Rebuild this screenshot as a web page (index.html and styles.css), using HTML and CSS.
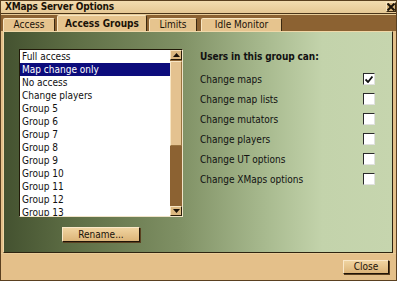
FILE: index.html
```html
<!DOCTYPE html>
<html>
<head>
<meta charset="utf-8">
<link rel="stylesheet" href="styles.css">
</head>
<body>
<div class="window">
  <div class="titlebar">
    <span class="title">XMaps Server Options</span>
    <span class="xbtn">
      <svg width="8" height="8" viewBox="0 0 8 8"><path d="M0.5 0.5 L7.5 7.5 M7.5 0.5 L0.5 7.5" stroke="#1a1208" stroke-width="2"/></svg>
    </span>
  </div>
  <div class="tabbar">
    <div class="tab t1">Access</div>
    <div class="tab active">Access Groups</div>
    <div class="tab t3">Limits</div>
    <div class="tab t4">Idle Monitor</div>
  </div>
  <div class="panel">
    <div class="leftcol">
      <div class="listbox">
        <ul class="items">
          <li>Full access</li>
          <li class="sel">Map change only</li>
          <li>No access</li>
          <li>Change players</li>
          <li>Group 5</li>
          <li>Group 6</li>
          <li>Group 7</li>
          <li>Group 8</li>
          <li>Group 9</li>
          <li>Group 10</li>
          <li>Group 11</li>
          <li>Group 12</li>
          <li>Group 13</li>
        </ul>
        <div class="scroll">
          <div class="sbtn"><svg width="7" height="4" viewBox="0 0 7 4"><path d="M3.5 0 L7 4 L0 4 Z" fill="#1a1208"/></svg></div>
          <div class="track"><div class="thumb"></div></div>
          <div class="sbtn"><svg width="7" height="4" viewBox="0 0 7 4"><path d="M0 0 L7 0 L3.5 4 Z" fill="#1a1208"/></svg></div>
        </div>
      </div>
      <div class="btn rename">Rename...</div>
    </div>
    <div class="rightcol">
      <div class="heading">Users in this group can:</div>
      <div class="row"><span>Change maps</span><span class="cb"><svg width="8" height="7" viewBox="0 0 8 7"><path d="M0.5 3.5 L3 6 L7.5 0.5" stroke="#111" stroke-width="1.8" fill="none"/></svg></span></div>
      <div class="row"><span>Change map lists</span><span class="cb"></span></div>
      <div class="row"><span>Change mutators</span><span class="cb"></span></div>
      <div class="row"><span>Change players</span><span class="cb"></span></div>
      <div class="row"><span>Change UT options</span><span class="cb"></span></div>
      <div class="row"><span>Change XMaps options</span><span class="cb"></span></div>
    </div>
  </div>
  <div class="footer">
    <div class="btn close">Close</div>
  </div>
</div>
</body>
</html>
```

FILE: styles.css
```css
* { box-sizing: border-box; }
html, body { margin: 0; padding: 0; }
body {
  width: 397px;
  height: 281px;
  overflow: hidden;
  font-family: "DejaVu Sans Condensed", "DejaVu Sans", sans-serif;
  font-size: 10px;
  color: #111;
}
.window {
  width: 397px;
  height: 281px;
  background: #e4c08a;
  border: 1px solid #5a4020;
  display: flex;
  flex-direction: column;
}
.titlebar {
  height: 13px;
  background: linear-gradient(#f2dcb0, #e6c894);
  border-bottom: 1px solid #4a3418;
  display: flex;
  align-items: center;
  justify-content: space-between;
  padding: 0 0 0 4px;
}
.title {
  font-weight: bold;
  font-size: 10px;
  letter-spacing: -0.2px;
  line-height: 12px;
  color: #1a1208;
}
.xbtn {
  width: 10px;
  height: 10px;
  background: #d8b47c;
  border: 1px solid;
  border-color: #f8e4c0 #3a2810 #3a2810 #f8e4c0;
  display: flex;
  align-items: center;
  justify-content: center;
}
.tabbar {
  height: 17px;
  background: #8c6232;
  border-top: 1px solid #e8cc98;
  display: flex;
  align-items: flex-end;
  padding-left: 2px;
  gap: 2px;
}
.tab {
  height: 13px;
  background: #e6c48e;
  border: 1px solid;
  border-bottom: none;
  border-color: #f8e6c2 #3a2810 transparent #f8e6c2;
  border-radius: 2px 2px 0 0;
  line-height: 12px;
  text-align: center;
  color: #1a1208;
}
.t1 { width: 52px; }
.active {
  width: 90px;
  height: 16px;
  font-weight: bold;
  line-height: 15px;
}
.t3 { width: 48px; }
.t4 { width: 81px; margin-left: 2px; }
.panel {
  height: 222px;
  margin: 0 3px 0 2px;
  border: 1px solid;
  border-color: #f0d8a8 #2e2410 #2e2410 #f0d8a8;
  background: linear-gradient(90deg, #445230 0%, #5e6e45 18%, #7f9064 45%, #a9bb90 68%, #c3d3ab 82%, #c6d5ae 100%);
  display: flex;
  padding: 17px 0 0 15px;
}
.leftcol {
  width: 164px;
  display: flex;
  flex-direction: column;
  align-items: center;
}
.listbox {
  width: 164px;
  height: 168px;
  background: #fff;
  border: 1px solid;
  border-color: #201808 #f0e4c8 #f0e4c8 #201808;
  display: flex;
}
.items {
  list-style: none;
  margin: 0;
  padding: 0;
  flex: 1;
  overflow: hidden;
}
.items li {
  height: 13px;
  line-height: 13px;
  padding-left: 2px;
  white-space: nowrap;
}
.items li.sel {
  background: #0c0c7c;
  color: #fff;
}
.scroll {
  width: 12px;
  display: flex;
  flex-direction: column;
  background: #8c6232;
}
.sbtn {
  height: 10px;
  background: #dcb880;
  border: 1px solid;
  border-color: #f8e4c0 #2a1c08 #2a1c08 #f8e4c0;
  display: flex;
  align-items: center;
  justify-content: center;
}
.track {
  flex: 1;
  padding-top: 1px;
}
.thumb {
  height: 85px;
  background: #e4c290;
  border: 1px solid;
  border-color: #f8e6c4 #9a7440 #9a7440 #f8e6c4;
}
.btn {
  background: linear-gradient(#f0d4a0, #dcb478);
  border: 1px solid;
  border-color: #fae8c8 #201408 #201408 #fae8c8;
  box-shadow: 1px 1px 0 #5a4020;
  text-align: center;
  color: #1a1208;
}
.rename {
  width: 78px;
  height: 15px;
  line-height: 13px;
  margin-top: 10px;
}
.rightcol {
  margin-left: 17px;
  width: 176px;
  display: flex;
  flex-direction: column;
}
.heading {
  font-weight: bold;
  letter-spacing: -0.1px;
  height: 16px;
  line-height: 16px;
  margin-bottom: 4px;
}
.row {
  height: 20px;
  display: flex;
  align-items: center;
  justify-content: space-between;
}
.cb {
  width: 12px;
  height: 12px;
  background: #fff;
  border: 1px solid;
  border-color: #2a2a2a #e0e0e0 #e0e0e0 #2a2a2a;
  display: flex;
  align-items: center;
  justify-content: center;
  margin-right: 1px;
}
.footer {
  flex: 1;
  display: flex;
  justify-content: flex-end;
  align-items: flex-start;
  padding: 6px 7px 0 0;
  border-top: 1px solid #e8cc98;
}
.close {
  width: 46px;
  height: 14px;
  line-height: 12px;
}
```
